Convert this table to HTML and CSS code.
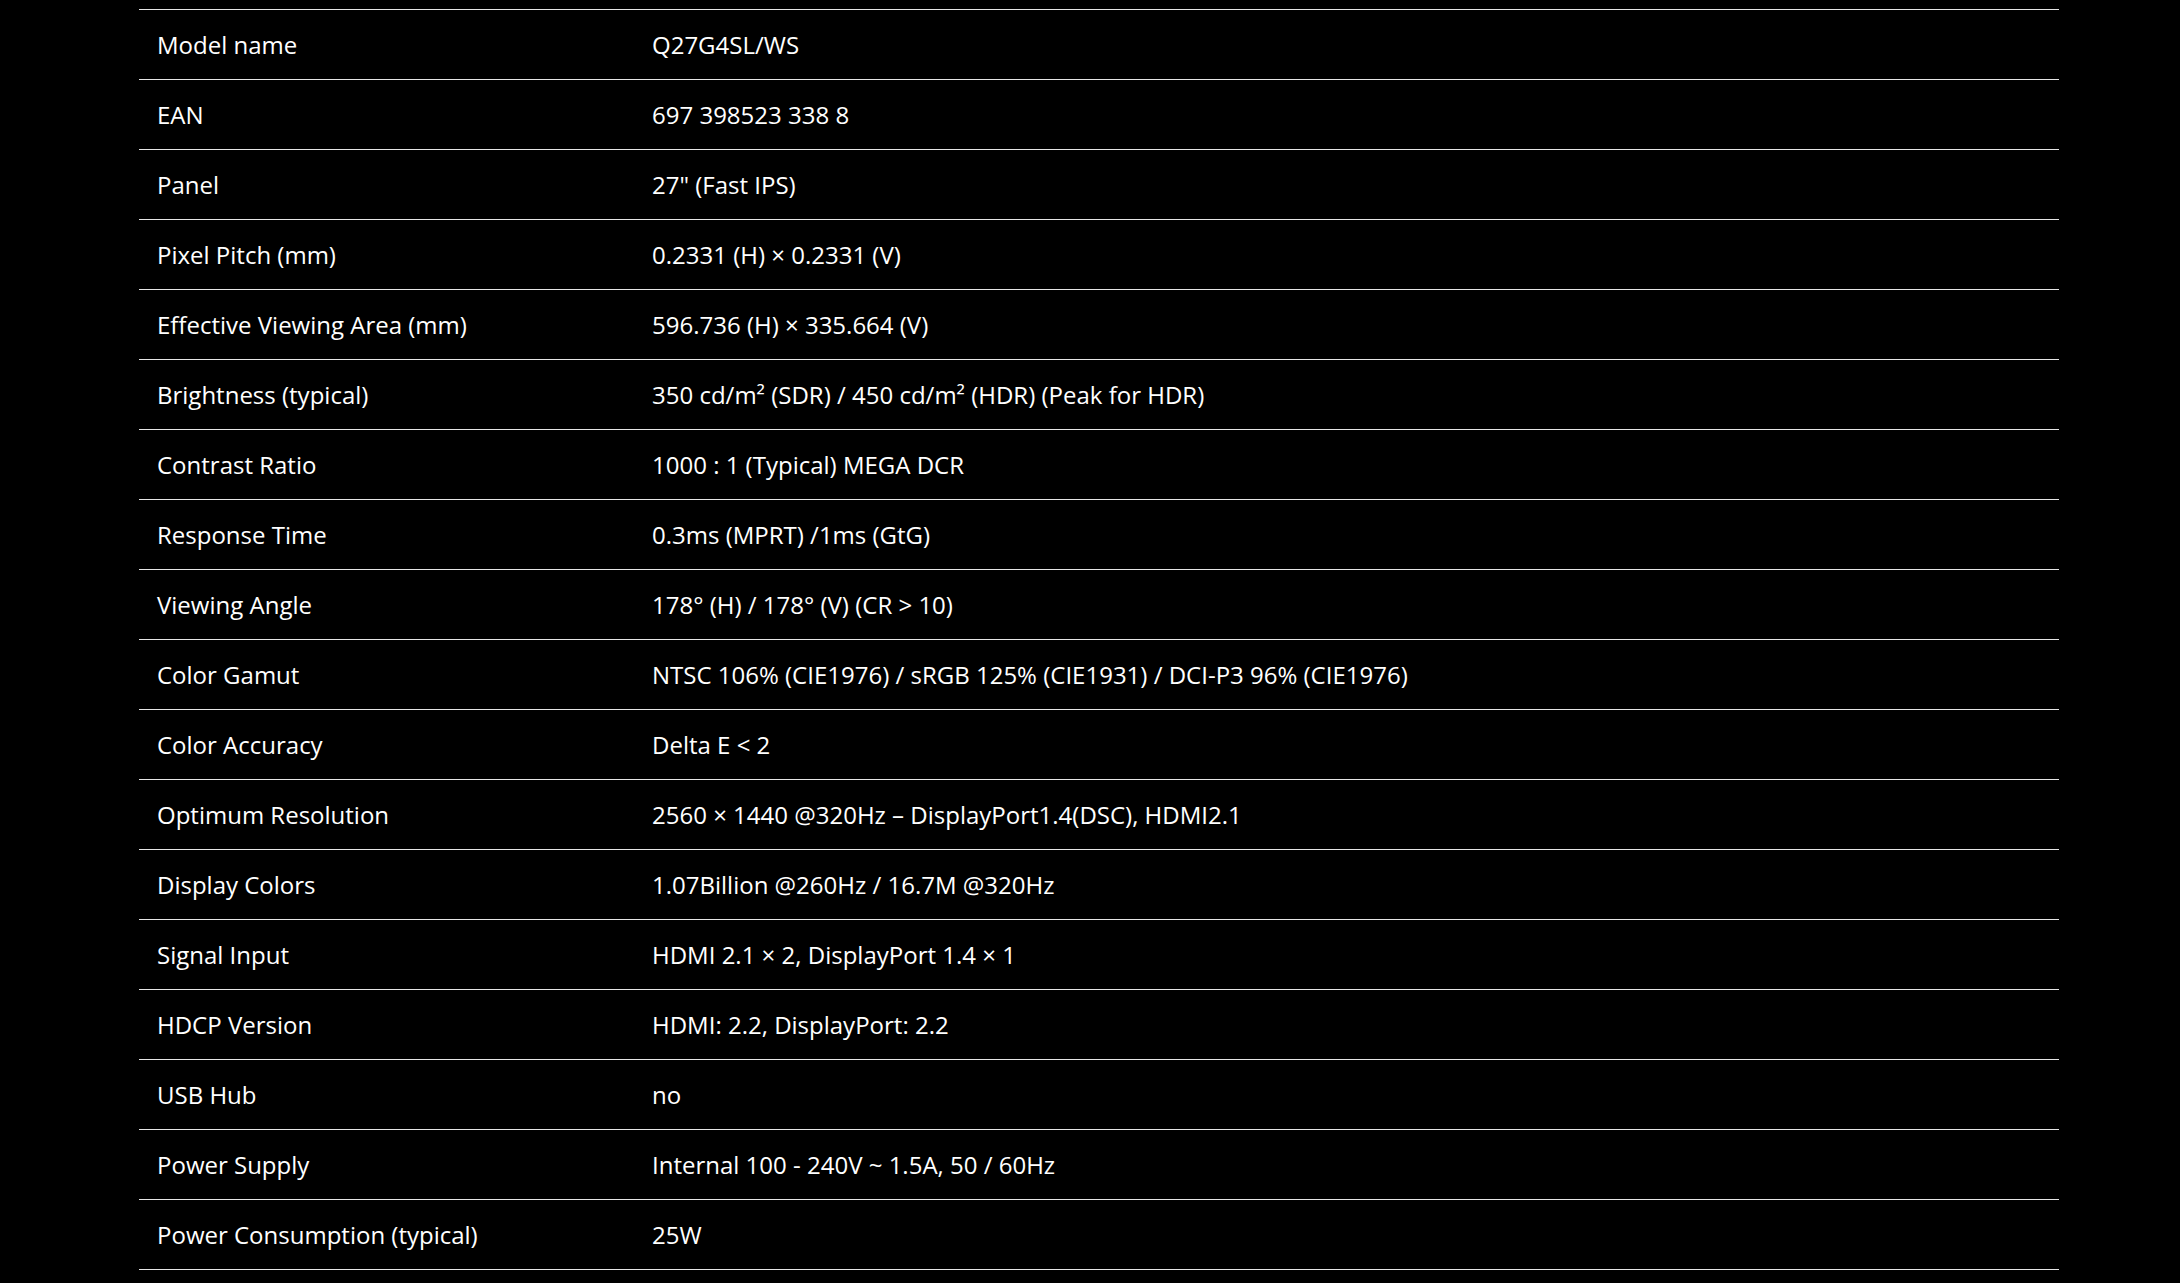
FILE: index.html
```html
<!DOCTYPE html>
<html lang="en">
<head>
<meta charset="utf-8">
<title>Specifications</title>
<link rel="stylesheet" href="styles.css">
</head>
<body>
<div class="specs">
  <div class="row"><div class="label">Model name</div><div class="value">Q27G4SL/WS</div></div>
  <div class="row"><div class="label">EAN</div><div class="value">697 398523 338 8</div></div>
  <div class="row"><div class="label">Panel</div><div class="value">27" (Fast IPS)</div></div>
  <div class="row"><div class="label">Pixel Pitch (mm)</div><div class="value">0.2331 (H) × 0.2331 (V)</div></div>
  <div class="row"><div class="label">Effective Viewing Area (mm)</div><div class="value">596.736 (H) × 335.664 (V)</div></div>
  <div class="row"><div class="label">Brightness (typical)</div><div class="value">350 cd/m² (SDR) / 450 cd/m² (HDR) (Peak for HDR)</div></div>
  <div class="row"><div class="label">Contrast Ratio</div><div class="value">1000 : 1 (Typical) MEGA DCR</div></div>
  <div class="row"><div class="label">Response Time</div><div class="value">0.3ms (MPRT) /1ms (GtG)</div></div>
  <div class="row"><div class="label">Viewing Angle</div><div class="value">178° (H) / 178° (V) (CR &gt; 10)</div></div>
  <div class="row"><div class="label">Color Gamut</div><div class="value">NTSC 106% (CIE1976) / sRGB 125% (CIE1931) / DCI-P3 96% (CIE1976)</div></div>
  <div class="row"><div class="label">Color Accuracy</div><div class="value">Delta E &lt; 2</div></div>
  <div class="row"><div class="label">Optimum Resolution</div><div class="value">2560 × 1440 @320Hz – DisplayPort1.4(DSC), HDMI2.1</div></div>
  <div class="row"><div class="label">Display Colors</div><div class="value">1.07Billion @260Hz / 16.7M @320Hz</div></div>
  <div class="row"><div class="label">Signal Input</div><div class="value">HDMI 2.1 × 2, DisplayPort 1.4 × 1</div></div>
  <div class="row"><div class="label">HDCP Version</div><div class="value">HDMI: 2.2, DisplayPort: 2.2</div></div>
  <div class="row"><div class="label">USB Hub</div><div class="value">no</div></div>
  <div class="row"><div class="label">Power Supply</div><div class="value">Internal 100 - 240V ~ 1.5A, 50 / 60Hz</div></div>
  <div class="row"><div class="label">Power Consumption (typical)</div><div class="value">25W</div></div>
</div>
</body>
</html>
```

FILE: styles.css
```css
html, body {
  margin: 0;
  padding: 0;
  background: #000;
}
body {
  color: #fff;
  font-family: "Open Sans", "Noto Sans", "Liberation Sans", sans-serif;
  font-size: 24px;
}
.specs {
  width: 1920px;
  margin: 9px 0 0 139px;
  border-bottom: 1px solid #e6e6e6;
}
.row {
  display: grid;
  grid-template-columns: 495px 1fr;
  height: 69px;
  align-items: center;
  border-top: 1px solid #e6e6e6;
}
.label, .value {
  padding-left: 18px;
  white-space: nowrap;
}
```
